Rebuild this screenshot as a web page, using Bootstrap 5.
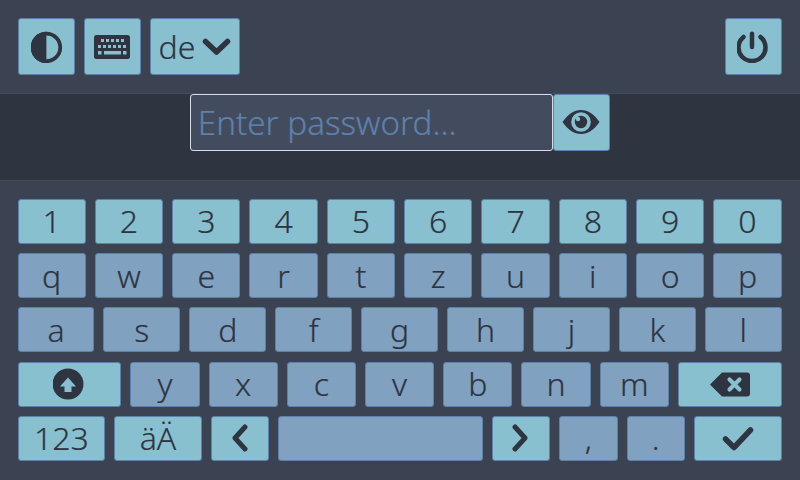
<!DOCTYPE html>
<html lang="de">
<head>
<meta charset="utf-8">
<title>Login</title>
<link href="https://cdn.jsdelivr.net/npm/bootstrap@5.3.0/dist/css/bootstrap.min.css" rel="stylesheet">
<style>
html, body { width: 800px; height: 480px; overflow: hidden; }
body { background: #3b4252; color: #2e3440; font-family: "Noto Sans", sans-serif; font-weight: 300; }
.topbar { height: 94px; padding: 18.33px; gap: 9.33px; border-bottom: 1px solid #434c5e; }
.pwpanel { height: 87px; background: #2e3440; border-bottom: 1px solid #434c5e; }
.pwinput { width: 362.67px; height: 56.67px; flex: none; background: #434c5e; border: 1px solid #d8dee9; border-radius: 3px; color: #2e3440; font-size: 33.2px; font-weight: 300; padding: 0 6.5px; box-shadow: none; -webkit-text-stroke: 0.2px; }
.pwinput::placeholder { color: #5e81ac; opacity: 1; }
.kbd-area { padding: 17.7px 18.4px 18px 17.5px; gap: 9.1px; height: 299px; }
.kbrow { gap: 9px; height: 45.2px; }
.kk, .sq { display: flex; align-items: center; justify-content: center; padding: 0; border: 1px solid #5e81ac; border-radius: 3px; color: #2e3440; font-size: 32px; font-weight: 300; line-height: 1; background: #81a1c1; -webkit-text-stroke: 0.2px; }
.kk:hover, .sq:hover { background: #81a1c1; border-color: #5e81ac; color: #2e3440; }
.kk { flex: 1 1 10px; min-width: 0; height: 100%; }
.act, .act:hover, .sq, .sq:hover { background: #88c0d0; }
.sq { width: 56.67px; height: 56.67px; flex: none; }
.langbtn { width: 89.33px; gap: 7px; }
.u15 { flex: 1.5 1 15px; }
.u35 { flex: 3.5 1 35px; }
</style>
</head>
<body>
<div class="d-flex topbar">
  <button class="btn sq" type="button" aria-label="Kontrast"><svg width="32" height="32" viewBox="0 0 32 32"><circle cx="15.400" cy="16.400" r="13.800" fill="none" stroke="#2e3440" stroke-width="3.800"/><path d="M15.400 .7a15.700 15.700 0 0 0 0 31.400z" fill="#2e3440"/></svg></button>
  <button class="btn sq" type="button" aria-label="Tastatur"><svg width="38" height="26" viewBox="1 0 38 26"><rect width="36" height="24" x="1" y="1" rx="2.500" fill="#2e3440"/><g fill="#88c0d0"><rect x="8" y="5" width="3" height="3"/><rect x="13" y="5" width="3" height="3"/><rect x="18" y="5" width="3" height="3"/><rect x="23" y="5" width="3" height="3"/><rect x="28" y="5" width="3" height="3"/><rect x="5" y="11" width="3" height="3"/><rect x="10" y="11" width="3" height="3"/><rect x="15" y="11" width="3" height="3"/><rect x="20" y="11" width="3" height="3"/><rect x="25" y="11" width="3" height="3"/><rect x="30" y="11" width="3" height="3"/><rect x="5" y="17" width="3.500" height="3.500"/><rect x="11" y="17" width="17" height="3.500"/><rect x="30" y="17" width="3.500" height="3.500"/></g></svg></button>
  <button class="btn sq langbtn" type="button">de<svg width="29" height="19" viewBox="0 0 29 19"><path d="M3.500 4.500l11 10.500 11-10.500" fill="none" stroke="#2e3440" stroke-width="5.500" stroke-linecap="round" stroke-linejoin="round"/></svg></button>
  <button class="btn sq ms-auto" type="button" aria-label="Ausschalten"><svg width="32" height="32" viewBox="0 0 32 32" fill="none" stroke="#2e3440" stroke-width="4.500" stroke-linecap="round"><path d="M6.500 6a13.500 13.500 0 1 0 17 0"/><path d="M15 2.700V16"/></svg></button>
</div>
<div class="d-flex justify-content-center pwpanel">
  <input class="form-control pwinput" type="password" placeholder="Enter password...">
  <button class="btn sq" type="button" aria-label="Anzeigen"><svg width="38" height="26" viewBox="0 0 38 26"><path d="M.5 13C6 5 12 1 19 1s13 4 18.500 12C32 21 26 25 19 25S6 21 .5 13z" fill="#2e3440"/><circle cx="19" cy="13" r="9.800" fill="#88c0d0"/><circle cx="19" cy="13" r="6.200" fill="#2e3440"/><circle cx="16" cy="10" r="2.200" fill="#88c0d0"/></svg></button>
</div>
<div class="d-flex flex-column kbd-area">
  <div class="d-flex kbrow">
    <button class="btn kk act">1</button><button class="btn kk act">2</button><button class="btn kk act">3</button><button class="btn kk act">4</button><button class="btn kk act">5</button><button class="btn kk act">6</button><button class="btn kk act">7</button><button class="btn kk act">8</button><button class="btn kk act">9</button><button class="btn kk act">0</button>
  </div>
  <div class="d-flex kbrow">
    <button class="btn kk">q</button><button class="btn kk">w</button><button class="btn kk">e</button><button class="btn kk">r</button><button class="btn kk">t</button><button class="btn kk">z</button><button class="btn kk">u</button><button class="btn kk">i</button><button class="btn kk">o</button><button class="btn kk">p</button>
  </div>
  <div class="d-flex kbrow">
    <button class="btn kk">a</button><button class="btn kk">s</button><button class="btn kk">d</button><button class="btn kk">f</button><button class="btn kk">g</button><button class="btn kk">h</button><button class="btn kk">j</button><button class="btn kk">k</button><button class="btn kk">l</button>
  </div>
  <div class="d-flex kbrow">
    <button class="btn kk act u15" aria-label="Umschalt"><svg width="32" height="32" viewBox="1 0 32 32"><circle cx="16" cy="16" r="15.500" fill="#2e3440"/><path d="M16 9.500l8 9h-4.500V24h-7v-5.500H8z" fill="#88c0d0"/></svg></button>
    <button class="btn kk">y</button><button class="btn kk">x</button><button class="btn kk">c</button><button class="btn kk">v</button><button class="btn kk">b</button><button class="btn kk">n</button><button class="btn kk">m</button>
    <button class="btn kk act u15" aria-label="Löschen"><svg width="41" height="25" viewBox="0 0 41 25"><path d="M13 .5h25a3 3 0 0 1 3 3v18a3 3 0 0 1-3 3H13L1 12.500z" fill="#2e3440"/><path d="M20.500 7.500l10 10M30.500 7.500l-10 10" stroke="#88c0d0" stroke-width="4.200" stroke-linecap="round" fill="none"/></svg></button>
  </div>
  <div class="d-flex kbrow">
    <button class="btn kk act u15">123</button><button class="btn kk act u15">äÄ</button>
    <button class="btn kk act" aria-label="Links"><svg width="17" height="28" viewBox="0 0 17 28"><path d="M14 3L4 14l10 11" fill="none" stroke="#2e3440" stroke-width="5" stroke-linecap="round" stroke-linejoin="round"/></svg></button>
    <button class="btn kk u35" aria-label="Leertaste"></button>
    <button class="btn kk act" aria-label="Rechts"><svg width="17" height="28" viewBox="0 0 17 28"><path d="M3 3l10 11L3 25" fill="none" stroke="#2e3440" stroke-width="5" stroke-linecap="round" stroke-linejoin="round"/></svg></button>
    <button class="btn kk">,</button><button class="btn kk">.</button>
    <button class="btn kk act u15" aria-label="OK"><svg width="32" height="25" viewBox="0 0 32 25"><path d="M3.500 13l8.500 8.500L28.500 4" fill="none" stroke="#2e3440" stroke-width="5.500" stroke-linecap="round" stroke-linejoin="round"/></svg></button>
  </div>
</div>
<script src="https://cdn.jsdelivr.net/npm/bootstrap@5.3.0/dist/js/bootstrap.bundle.min.js"></script>
</body>
</html>
